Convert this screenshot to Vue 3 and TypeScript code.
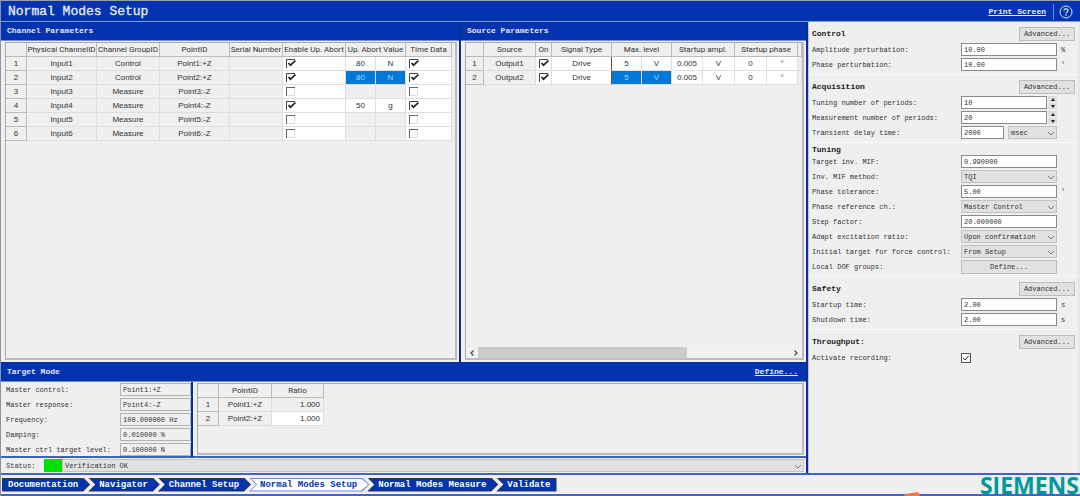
<script setup lang="ts">
import { reactive, ref } from 'vue'

interface Channel {
  input: string
  group: string
  point: string
  abort: boolean
  value: string
  unit: string
  selected?: boolean
}
interface Field {
  id: string
  label: string
  kind: 'text' | 'spin' | 'select' | 'delay' | 'button' | 'check'
  value: string
  unit?: string
}
interface Section {
  title: string
  advanced: boolean
  fields: Field[]
}

const channels = reactive<Channel[]>([
  { input: 'Input1', group: 'Control', point: 'Point1:+Z', abort: true, value: '80', unit: 'N' },
  { input: 'Input2', group: 'Control', point: 'Point2:+Z', abort: true, value: '80', unit: 'N', selected: true },
  { input: 'Input3', group: 'Measure', point: 'Point3:-Z', abort: false, value: '', unit: '' },
  { input: 'Input4', group: 'Measure', point: 'Point4:-Z', abort: true, value: '50', unit: 'g' },
  { input: 'Input5', group: 'Measure', point: 'Point5:-Z', abort: false, value: '', unit: '' },
  { input: 'Input6', group: 'Measure', point: 'Point6:-Z', abort: false, value: '', unit: '' }
])
const timeData = reactive<boolean[]>(channels.map((c) => c.abort))

const sources = reactive([
  { name: 'Output1', on: true, selected: false },
  { name: 'Output2', on: true, selected: true }
])

const sections = reactive<Section[]>([
  {
    title: 'Control',
    advanced: true,
    fields: [
      { id: 'amp', label: 'Amplitude perturbation:', kind: 'text', value: '10.00', unit: '%' },
      { id: 'phase', label: 'Phase perturbation:', kind: 'text', value: '10.00', unit: '°' }
    ]
  },
  {
    title: 'Acquisition',
    advanced: true,
    fields: [
      { id: 'tun', label: 'Tuning number of periods:', kind: 'spin', value: '10' },
      { id: 'meas', label: 'Measurement number of periods:', kind: 'spin', value: '20' },
      { id: 'delay', label: 'Transient delay time:', kind: 'delay', value: '2000', unit: 'msec' }
    ]
  },
  {
    title: 'Tuning',
    advanced: false,
    fields: [
      { id: 'mif', label: 'Target inv. MIF:', kind: 'text', value: '0.990000' },
      { id: 'method', label: 'Inv. MIF method:', kind: 'select', value: 'TQI' },
      { id: 'tol', label: 'Phase tolerance:', kind: 'text', value: '5.00', unit: '°' },
      { id: 'refch', label: 'Phase reference ch.:', kind: 'select', value: 'Master Control' },
      { id: 'step', label: 'Step factor:', kind: 'text', value: '20.000000' },
      { id: 'ratio', label: 'Adapt excitation ratio:', kind: 'select', value: 'Upon confirmation' },
      { id: 'init', label: 'Initial target for force control:', kind: 'select', value: 'From Setup' },
      { id: 'dof', label: 'Local DOF groups:', kind: 'button', value: 'Define...' }
    ]
  },
  {
    title: 'Safety',
    advanced: true,
    fields: [
      { id: 'start', label: 'Startup time:', kind: 'text', value: '2.00', unit: 's' },
      { id: 'shut', label: 'Shutdown time:', kind: 'text', value: '2.00', unit: 's' }
    ]
  },
  {
    title: 'Throughput:',
    advanced: true,
    fields: [{ id: 'rec', label: 'Activate recording:', kind: 'check', value: 'on' }]
  }
])

const target = [
  { id: 'mc', label: 'Master control:', value: 'Point1:+Z' },
  { id: 'mr', label: 'Master response:', value: 'Point4:-Z' },
  { id: 'fr', label: 'Frequency:', value: '100.000000 Hz' },
  { id: 'da', label: 'Damping:', value: '0.010000 %' },
  { id: 'tl', label: 'Master ctrl target level:', value: '0.100000 N' }
]

const steps = ['Documentation', 'Navigator', 'Channel Setup', 'Normal Modes Setup', 'Normal Modes Measure', 'Validate']
const active = ref('Normal Modes Setup')
</script>

<template>
  <div class="app">
    <header class="title-bar">
      <h1>Normal Modes Setup</h1>
      <a class="print" href="#">Print Screen</a>
      <button class="help" type="button" aria-label="Help">
        <svg viewBox="0 0 14 14" width="14" height="14">
          <circle cx="7" cy="7" r="6" fill="none" stroke="#dfe6f8" stroke-width="1" />
          <path d="M5 5.6C5 3.2 9 3.2 9 5.5C9 7 7 6.8 7 8.4" fill="none" stroke="#dfe6f8" stroke-width="1.2" />
          <circle cx="7" cy="10.1" r=".8" fill="#dfe6f8" />
        </svg>
      </button>
    </header>

    <main class="main">
      <div class="left">
        <div class="top">
          <section class="panel">
            <h2 class="bar">Channel Parameters</h2>
            <div class="well">
              <table class="grid channels">
                <colgroup>
                  <col class="w21" /><col class="w70" /><col class="w63" /><col class="w70" /><col class="w53" />
                  <col class="w63" /><col class="w30" /><col class="w30" /><col class="w46" />
                </colgroup>
                <thead>
                  <tr>
                    <th></th>
                    <th>Physical ChannelID</th>
                    <th>Channel GroupID</th>
                    <th>PointID</th>
                    <th>Serial Number</th>
                    <th>Enable Up. Abort</th>
                    <th colspan="2">Up. Abort Value</th>
                    <th>Time Data</th>
                  </tr>
                </thead>
                <tbody>
                  <tr v-for="(c, i) in channels" :key="c.input">
                    <th>{{ i + 1 }}</th>
                    <td>{{ c.input }}</td>
                    <td>{{ c.group }}</td>
                    <td>{{ c.point }}</td>
                    <td></td>
                    <td class="white tick"><input v-model="c.abort" type="checkbox" :aria-label="'Enable abort ' + c.input" /></td>
                    <td :class="{ white: c.value, sel: c.selected }">{{ c.value }}</td>
                    <td :class="{ white: c.value, sel: c.selected }">{{ c.unit }}</td>
                    <td class="white tick"><input v-model="timeData[i]" type="checkbox" :aria-label="'Time data ' + c.input" /></td>
                  </tr>
                </tbody>
              </table>
            </div>
          </section>

          <section class="panel second">
            <h2 class="bar">Source Parameters</h2>
            <div class="well">
              <table class="grid sources">
                <colgroup>
                  <col class="w18" /><col class="w52" /><col class="w16" /><col class="w60" /><col class="w30" /><col class="w30" />
                  <col class="w31" /><col class="w32" /><col class="w32" /><col class="w31" /><col />
                </colgroup>
                <thead>
                  <tr>
                    <th></th>
                    <th>Source</th>
                    <th>On</th>
                    <th>Signal Type</th>
                    <th colspan="2">Max. level</th>
                    <th colspan="2">Startup ampl.</th>
                    <th colspan="2">Startup phase</th>
                    <th></th>
                  </tr>
                </thead>
                <tbody>
                  <tr v-for="(s, i) in sources" :key="s.name">
                    <th>{{ i + 1 }}</th>
                    <td>{{ s.name }}</td>
                    <td class="white tick"><input v-model="s.on" type="checkbox" :aria-label="'On ' + s.name" /></td>
                    <td class="white edge">Drive</td>
                    <td class="white" :class="{ sel: s.selected }">5</td>
                    <td class="white" :class="{ sel: s.selected }">V</td>
                    <td class="white">0.005</td>
                    <td class="white">V</td>
                    <td class="white">0</td>
                    <td class="white">°</td>
                    <td></td>
                  </tr>
                </tbody>
              </table>
              <div class="scroll">
                <button type="button" aria-label="Scroll left">
                  <svg viewBox="0 0 6 8" width="6" height="8"><path d="M4.500 1.500L2 4L4.500 6.500" /></svg>
                </button>
                <div class="track"><div class="thumb"></div></div>
                <button type="button" aria-label="Scroll right">
                  <svg viewBox="0 0 6 8" width="6" height="8"><path d="M1.500 1.500L4 4L1.500 6.500" /></svg>
                </button>
              </div>
            </div>
          </section>
        </div>

        <section class="target">
          <div class="bar target-bar">
            <h2>Target Mode</h2>
            <a href="#">Define...</a>
          </div>
          <div class="target-body">
            <div class="target-form">
              <div v-for="t in target" :key="t.id" class="target-row">
                <label :for="t.id">{{ t.label }}</label>
                <input :id="t.id" type="text" readonly :value="t.value" />
              </div>
            </div>
            <div class="target-side">
              <div class="well">
                <table class="grid ratios">
                  <colgroup><col class="w21" /><col class="w53" /><col class="w52" /></colgroup>
                  <thead>
                    <tr><th></th><th>PointID</th><th>Ratio</th></tr>
                  </thead>
                  <tbody>
                    <tr><th>1</th><td>Point1:+Z</td><td class="num">1.000</td></tr>
                    <tr><th>2</th><td>Point2:+Z</td><td class="num white">1.000</td></tr>
                  </tbody>
                </table>
              </div>
            </div>
          </div>
        </section>

        <div class="status">
          <label for="status">Status:</label>
          <span class="lamp"></span>
          <span class="select">
            <select id="status"><option>Verification OK</option></select>
            <svg viewBox="0 0 8 5" width="8" height="5"><path d="M1 1L4 4L7 1" /></svg>
          </span>
        </div>
      </div>

      <aside class="right">
        <section v-for="s in sections" :key="s.title" class="group">
          <div class="head" :class="{ short: !s.advanced }">
            <h3>{{ s.title }}</h3>
            <button v-if="s.advanced" class="btn" type="button">Advanced...</button>
          </div>
          <div v-for="f in s.fields" :key="f.id" class="row">
            <label :for="f.id">{{ f.label }}</label>
            <div class="control">
              <input v-if="f.kind === 'text'" :id="f.id" v-model="f.value" type="text" />
              <template v-else-if="f.kind === 'spin'">
                <input :id="f.id" v-model="f.value" type="text" />
                <span class="spin">
                  <button type="button" aria-label="Increase"><svg viewBox="0 0 6 3" width="6" height="3"><path d="M3 0L5 3H1Z" /></svg></button>
                  <button type="button" aria-label="Decrease"><svg viewBox="0 0 6 3" width="6" height="3"><path d="M3 3L5 0H1Z" /></svg></button>
                </span>
              </template>
              <template v-else-if="f.kind === 'delay'">
                <input :id="f.id" v-model="f.value" class="brief" type="text" />
                <span class="select">
                  <select aria-label="Delay unit"><option>{{ f.unit }}</option></select>
                  <svg viewBox="0 0 8 5" width="8" height="5"><path d="M1 1L4 4L7 1" /></svg>
                </span>
              </template>
              <span v-else-if="f.kind === 'select'" class="select">
                <select :id="f.id"><option>{{ f.value }}</option></select>
                <svg viewBox="0 0 8 5" width="8" height="5"><path d="M1 1L4 4L7 1" /></svg>
              </span>
              <button v-else-if="f.kind === 'button'" :id="f.id" class="btn wide" type="button">{{ f.value }}</button>
              <input v-else :id="f.id" class="flat" type="checkbox" checked />
            </div>
            <span class="unit">{{ f.kind === 'delay' ? '' : f.unit }}</span>
          </div>
        </section>
      </aside>
    </main>

    <footer class="footer">
      <nav class="steps">
        <button v-for="s in steps" :key="s" type="button" class="step" :class="{ active: s === active }" @click="active = s">
          <span>{{ s }}</span>
        </button>
      </nav>
      <div class="brand">SIEMENS</div>
      <svg class="flag" viewBox="0 0 18 4" width="18" height="4"><path d="M1 2L14 0L16 4H0Z" fill="#f4764a" /></svg>
    </footer>
  </div>
</template>

<style>
body {
  margin: 0;
  background: #efefef;
}
</style>

<style scoped>
* {
  box-sizing: border-box;
}
.app {
  display: flex;
  flex-direction: column;
  min-height: 100vh;
  border-top: 1px solid #9aa0a8;
  border-left: 1px solid #8a93a5;
  background: #efefef;
  color: #333;
  font: 7px/10px "Liberation Mono", monospace;
}
h1, h2, h3 {
  margin: 0;
}
button, input, select {
  margin: 0;
  padding: 0;
  border: 0;
  border-radius: 0;
  color: inherit;
  font: inherit;
}
svg {
  display: block;
}
.title-bar {
  display: flex;
  align-items: center;
  height: 21px;
  padding: 2px 7px 0;
  background: #0433b1;
  border-bottom: 1px solid #7f9add;
  color: #e8edfa;
}
h1 {
  flex: 1;
  font-size: 13px;
  line-height: 18px;
  font-weight: 400;
  -webkit-text-stroke: 0.3px #e8edfa;
}
.print {
  color: inherit;
  font-weight: 700;
  font-size: 8px;
  margin-right: 7px;
}
.help {
  height: 16px;
  padding-left: 5px;
  border-left: 1px solid #6d8bd8;
  background: none;
}
.main {
  flex: 1;
  display: grid;
  grid-template-columns: minmax(0, 1fr) 272px;
}
.left {
  display: flex;
  flex-direction: column;
  border-right: 2px solid #0a2f92;
}
.top {
  flex: 1;
  display: grid;
  grid-template-columns: 458fr 347fr;
}
.panel {
  display: flex;
  flex-direction: column;
  min-width: 0;
}
.second {
  border-left: 2px solid #0a2f92;
}
.bar {
  height: 19px;
  padding: 0 6px;
  background: #0433b1;
  border-bottom: 1px solid #6d8bd8;
  color: #e1e8f9;
  font-size: 8px;
  line-height: 18px;
  font-weight: 700;
}
.well {
  flex: 1;
  display: flex;
  flex-direction: column;
  margin: 1px 2px 2px 4px;
  border: 1px solid #a9a9a9;
  border-right: 2px solid #bdbdbd;
  border-bottom: 2px solid #bdbdbd;
}
.grid {
  table-layout: fixed;
  border-collapse: separate;
  border-spacing: 0;
  font: 8px/13px "Liberation Sans", Arial, sans-serif;
}
.grid thead {
  font-family: Roboto, "Liberation Sans", sans-serif;
}
.channels {
  width: 446px;
}
.sources {
  width: 100%;
}
.ratios {
  width: 126px;
}
.grid th, .grid td {
  height: 14px;
  padding: 0;
  border-right: 1px solid #dedede;
  border-bottom: 1px solid #dedede;
  font-weight: 400;
  text-align: center;
  white-space: nowrap;
}
.grid th {
  border-color: #bcbcbc;
}
.grid .white {
  background: #fff;
}
.grid .sel {
  background: #0078d7;
  color: #a9d4f8;
}
.grid .edge {
  border-right-color: #555;
}
.grid .num {
  padding-right: 3px;
  text-align: right;
}
.grid .tick {
  padding-left: 3px;
  text-align: left;
}
.tick input {
  appearance: none;
  display: block;
  width: 11px;
  height: 9px;
  background: linear-gradient(#666, #666) 0 0 / 9px 1px no-repeat,
    linear-gradient(#666, #666) 0 0 / 1px 9px no-repeat,
    linear-gradient(#ddd, #ddd) 0 8px / 9px 1px no-repeat,
    linear-gradient(#ddd, #ddd) 8px 0 / 1px 9px no-repeat;
}
.tick input:checked {
  background: url("data:image/svg+xml,%3Csvg xmlns='http://www.w3.org/2000/svg' viewBox='0 0 11 9'%3E%3Cpath d='M.5 9V.5H9' fill='none' stroke='%23444'/%3E%3Cpath d='M2.500 4L4.500 6.200L9.500 1.500' fill='none' stroke='%23222' stroke-width='1.700'/%3E%3C/svg%3E") no-repeat;
}
.w16 { width: 16px; }
.w18 { width: 18px; }
.w21 { width: 21px; }
.w30 { width: 30px; }
.w31 { width: 31px; }
.w32 { width: 32px; }
.w46 { width: 46px; }
.w52 { width: 52px; }
.w53 { width: 53px; }
.w60 { width: 60px; }
.w63 { width: 63px; }
.w70 { width: 70px; }
.scroll {
  display: flex;
  height: 11px;
  margin-top: auto;
  background: #f0f0f0;
}
.scroll button {
  display: grid;
  place-items: center;
  width: 12px;
  background: none;
}
.scroll path {
  fill: none;
  stroke: #555;
  stroke-width: 1.4;
}
.track {
  flex: 1;
}
.thumb {
  width: 67%;
  height: 11px;
  background: #cbcbcb;
}
.target-bar {
  display: flex;
  justify-content: space-between;
  align-items: center;
  height: 20px;
  border-top: 1px solid #0a2f92;
}
.target-bar h2 {
  font-size: 8px;
}
.target-bar a {
  margin-right: 2px;
  color: inherit;
}
.target-body {
  display: grid;
  grid-template-columns: 192px minmax(0, 1fr);
  height: 76px;
  border-bottom: 2px solid #3a60c4;
}
.target-form {
  padding-left: 5px;
  border-right: 2px solid #0a2f92;
}
.target-row {
  display: flex;
  align-items: center;
  height: 15px;
}
.target-row label {
  width: 114px;
}
.target-row input {
  flex: 1;
  min-width: 0;
  height: 13px;
  padding-left: 2px;
  background: #efefef;
  border: 1px solid #b2b2b2;
}
.target-side {
  display: flex;
}
.status {
  display: flex;
  align-items: center;
  height: 15px;
  padding-left: 5px;
}
.status label {
  width: 38px;
}
.lamp {
  width: 18px;
  height: 13px;
  background: #00e000;
}
.status .select {
  margin-right: 2px;
}
.select {
  position: relative;
  flex: 1;
  min-width: 0;
}
.select select {
  appearance: none;
  display: block;
  width: 100%;
  height: 13px;
  padding-left: 2px;
  background: #e1e1e1;
  border: 1px solid #c2c2c2;
}
.select svg {
  position: absolute;
  right: 2px;
  top: 5px;
  pointer-events: none;
}
.select path {
  fill: none;
  stroke: #777;
}
.right {
  border-left: 1px solid #b8c4e2;
  border-right: 2px solid #e6e6e6;
}
.group {
  padding: 3px 3px 2px;
  border-top: 1px solid #fafafa;
}
.group:first-child {
  border-top: 0;
}
.head {
  display: flex;
  justify-content: space-between;
  align-items: center;
  height: 17px;
}
.short {
  height: 8px;
}
h3 {
  color: #222;
  font-size: 8px;
  line-height: 8px;
}
.btn {
  width: 56px;
  height: 14px;
  background: #e1e1e1;
  border: 1px solid #bdbdbd;
  line-height: 12px;
}
.row {
  display: flex;
  align-items: center;
  height: 15px;
}
.row label {
  flex: 1;
}
.control {
  display: flex;
  align-items: center;
  width: 96px;
}
.control input[type="text"] {
  flex: 1;
  min-width: 0;
  height: 13px;
  padding-left: 2px;
  background: #fff;
  border: 1px solid #8a8a8a;
}
.control .brief {
  max-width: 43px;
  margin-right: 4px;
}
.spin {
  display: flex;
  flex-direction: column;
  gap: 1px;
  width: 10px;
  padding-left: 1px;
}
.spin button {
  display: grid;
  place-items: center;
  height: 6px;
  background: #dedede;
}
.spin path {
  fill: #222;
}
.control .wide {
  width: 96px;
}
.flat {
  appearance: none;
  width: 10px;
  height: 10px;
  background: #fff;
  border: 1px solid #555;
}
.flat:checked {
  background: #fff url("data:image/svg+xml,%3Csvg xmlns='http://www.w3.org/2000/svg' viewBox='0 0 8 8'%3E%3Cpath d='M1 4L3 6L7 1.500' fill='none' stroke='%23333'/%3E%3C/svg%3E") no-repeat;
}
.unit {
  width: 18px;
  padding-left: 4px;
}
.footer {
  position: relative;
  display: flex;
  justify-content: space-between;
  align-items: center;
  height: 23px;
  padding-right: 1px;
  border-top: 2px solid #4163c6;
  border-bottom: 2px solid #4163c6;
}
.steps {
  display: flex;
  padding-left: 1px;
}
.step {
  height: 14px;
  margin-left: -2px;
  padding: 1px;
  background: #2b3350;
  clip-path: polygon(0 0, calc(100% - 7px) 0, 100% 50%, calc(100% - 7px) 100%, 0 100%, 7px 50%);
  color: #fff;
  font-size: 9px;
  font-weight: 700;
  line-height: 12px;
}
.step span {
  display: block;
  padding: 0 11px 0 10px;
  background: #0433b1;
  clip-path: polygon(1px 0, calc(100% - 7px) 0, 100% 50%, calc(100% - 7px) 100%, 1px 100%, 7px 50%);
}
.step:first-child {
  margin-left: 0;
  clip-path: polygon(0 0, calc(100% - 7px) 0, 100% 50%, calc(100% - 7px) 100%, 0 100%);
}
.step:first-child span {
  padding-left: 5px;
  clip-path: polygon(0 0, calc(100% - 7px) 0, 100% 50%, calc(100% - 7px) 100%, 0 100%);
}
.step:last-child {
  clip-path: polygon(0 0, 100% 0, 100% 100%, 0 100%, 7px 50%);
}
.step:last-child span {
  padding-right: 5px;
  clip-path: polygon(1px 0, 100% 0, 100% 100%, 1px 100%, 7px 50%);
}
.step.active {
  background: #6d8bd8;
  color: #0433b1;
}
.active span {
  background: #fff;
}
.brand {
  color: #099;
  font: 700 23px/18px "Open Sans", "Noto Sans", sans-serif;
}
.flag {
  position: absolute;
  right: 158px;
  bottom: -2px;
}
</style>
